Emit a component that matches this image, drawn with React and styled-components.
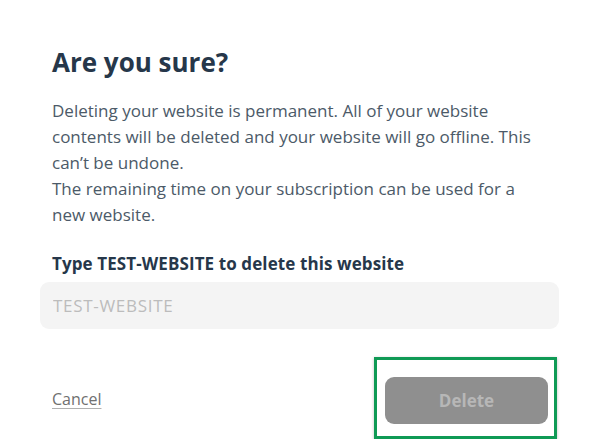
import styled, { createGlobalStyle } from "styled-components";

const Global = createGlobalStyle`
  html, body {
    margin: 0;
    background: #ffffff;
  }
  body {
    font-family: "Open Sans", "Noto Sans", sans-serif;
  }
`;

const Modal = styled.div`
  width: 589px;
  box-sizing: border-box;
  padding: 45px 30px 0 40px;
  display: flex;
  flex-direction: column;
`;

const Title = styled.h1`
  margin: 0 0 0 12px;
  font-size: 26px;
  line-height: 34px;
  font-weight: 700;
  color: #26374a;
`;

const Body = styled.p`
  margin: 19px 0 0 12px;
  width: 486px;
  font-size: 17px;
  line-height: 26px;
  color: #4c5a68;
`;

const Label = styled.label`
  margin: 26px 0 0 12px;
  font-size: 17px;
  line-height: 20px;
  font-weight: 700;
  letter-spacing: 0.1px;
  color: #26374a;
`;

const Input = styled.input`
  margin-top: 8px;
  height: 47px;
  flex-shrink: 0;
  box-sizing: border-box;
  border: none;
  border-radius: 9px;
  background: #f4f4f4;
  padding: 0 13px;
  font-family: inherit;
  font-size: 17px;
  letter-spacing: 0.7px;
  color: #333;
  outline: none;

  &::placeholder {
    color: #bcbcbc;
  }
`;

const Footer = styled.div`
  margin-top: 28px;
  display: flex;
  align-items: center;
  justify-content: space-between;
`;

const CancelLink = styled.a`
  margin-left: 12px;
  margin-top: 2px;
  font-size: 16px;
  color: #707070;
  text-decoration: underline;
  text-underline-offset: 3px;
  text-decoration-color: #b0b0b0;
  cursor: pointer;
`;

const Highlight = styled.div`
  margin-right: 2px;
  border: 3px solid #0f9a55;
  box-shadow: 0 1px 3px rgba(0, 0, 0, 0.25);
  padding: 17px 6px 12px 8px;
`;

const DeleteButton = styled.button`
  width: 163px;
  height: 47px;
  border: none;
  border-radius: 9px;
  background: #8f8f8f;
  color: #b7b7b7;
  font-family: inherit;
  font-size: 17px;
  font-weight: 700;
  display: block;
`;

export default function App() {
  return (
    <>
      <Global />
      <Modal>
        <Title>Are you sure?</Title>
        <Body>
          Deleting your website is permanent. All of your website contents
          will be deleted and your website will go offline. This can’t be
          undone.
          <br />
          The remaining time on your subscription can be used for a new
          website.
        </Body>
        <Label htmlFor="confirm">Type TEST-WEBSITE to delete this website</Label>
        <Input id="confirm" placeholder="TEST-WEBSITE" />
        <Footer>
          <CancelLink>Cancel</CancelLink>
          <Highlight>
            <DeleteButton disabled>Delete</DeleteButton>
          </Highlight>
        </Footer>
      </Modal>
    </>
  );
}
